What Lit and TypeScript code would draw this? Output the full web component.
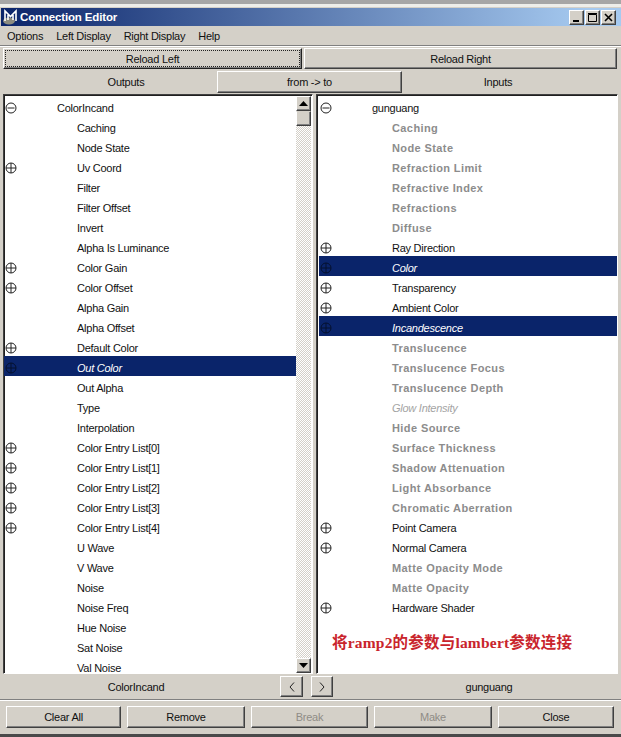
import { LitElement, html, css, svg } from "lit";
import { customElement } from "lit/decorators.js";

type Kind = "" | "dis" | "sel" | "ghost";
interface Row { label: string; exp?: "plus" | "minus"; kind?: Kind; top?: boolean }

const left: Row[] = [
  { label: "ColorIncand", exp: "minus", top: true },
  { label: "Caching" }, { label: "Node State" }, { label: "Uv Coord", exp: "plus" },
  { label: "Filter" }, { label: "Filter Offset" }, { label: "Invert" },
  { label: "Alpha Is Luminance" }, { label: "Color Gain", exp: "plus" },
  { label: "Color Offset", exp: "plus" }, { label: "Alpha Gain" }, { label: "Alpha Offset" },
  { label: "Default Color", exp: "plus" }, { label: "Out Color", exp: "plus", kind: "sel" },
  { label: "Out Alpha" }, { label: "Type" }, { label: "Interpolation" },
  { label: "Color Entry List[0]", exp: "plus" }, { label: "Color Entry List[1]", exp: "plus" },
  { label: "Color Entry List[2]", exp: "plus" }, { label: "Color Entry List[3]", exp: "plus" },
  { label: "Color Entry List[4]", exp: "plus" }, { label: "U Wave" }, { label: "V Wave" },
  { label: "Noise" }, { label: "Noise Freq" }, { label: "Hue Noise" }, { label: "Sat Noise" },
  { label: "Val Noise" },
];

const d = (label: string): Row => ({ label, kind: "dis" });
const right: Row[] = [
  { label: "gunguang", exp: "minus", top: true },
  d("Caching"), d("Node State"), d("Refraction Limit"), d("Refractive Index"), d("Refractions"),
  d("Diffuse"), { label: "Ray Direction", exp: "plus" }, { label: "Color", exp: "plus", kind: "sel" },
  { label: "Transparency", exp: "plus" }, { label: "Ambient Color", exp: "plus" },
  { label: "Incandescence", exp: "plus", kind: "sel" }, d("Translucence"), d("Translucence Focus"),
  d("Translucence Depth"), { label: "Glow Intensity", kind: "ghost" }, d("Hide Source"),
  d("Surface Thickness"), d("Shadow Attenuation"), d("Light Absorbance"), d("Chromatic Aberration"),
  { label: "Point Camera", exp: "plus" }, { label: "Normal Camera", exp: "plus" },
  d("Matte Opacity Mode"), d("Matte Opacity"), { label: "Hardware Shader", exp: "plus" },
];

const expander = (t?: "plus" | "minus") =>
  t
    ? html`<svg class="exp" viewBox="0 0 12 12" width="12" height="12" fill="none" stroke="currentColor" stroke-width="1">
        <circle cx="6" cy="6" r="5"></circle>
        ${svg`<path d="${t === "plus" ? "M1 6H11M6 1V11" : "M2.5 6H9.5"}"></path>`}
      </svg>`
    : html`<span class="exp"></span>`;

const arrow = (dir: "up" | "down") =>
  html`<svg viewBox="0 0 9 5" width="9" height="5"><path d="${dir === "up" ? "M0 5H9L4.5 0Z" : "M0 0H9L4.5 5Z"}" fill="#000"></path></svg>`;

const chevron = (dir: "l" | "r") =>
  html`<svg viewBox="0 0 6 10" width="6" height="10" fill="none" stroke="#222" stroke-width="1"><path d="${dir === "l" ? "M5 0.5L1 5L5 9.5" : "M1 0.5L5 5L1 9.5"}"></path></svg>`;

@customElement("app-root")
export class AppRoot extends LitElement {
  static styles = css`
    :host {
      display: flex; flex-direction: column; width: 621px; height: 737px; overflow: hidden;
      background: #d4d0c8; color: #111;
      font: 11px "Liberation Sans", Arial, sans-serif; letter-spacing: -0.25px;
    }
    .chrome { height: 4px; background: #a6a6a6; flex: none; }
    .chrome2 { height: 4px; background: linear-gradient(#eeeeea 0 75%, #d4d0c8 75%); flex: none; }
    .title {
      height: 18px; flex: none; margin-left: 1px; display: flex; align-items: center;
      background: linear-gradient(90deg, #0a246a, #a6caf0 95%);
      color: #fff; font-weight: bold; font-size: 11.5px; letter-spacing: -0.15px; padding-left: 1px; padding-right: 5px;
    }
    .title .name { flex: 1; }
    .wbtns { display: flex; gap: 1px; }
    .wbtn, .btn, .sbtn, .nav {
      background: #d4d0c8; box-sizing: border-box;
      border: 1px solid; border-color: #fff #404040 #404040 #fff;
      box-shadow: inset -1px -1px #808080;
    }
    .wbtn { width: 15px; height: 15px; display: grid; place-items: center; }
    .menu { height: 19px; flex: none; display: flex; align-items: center; gap: 13px; padding-left: 7px; }
    .groove { height: 2px; flex: none; background: linear-gradient(#808080 50%, #fff 50%); }
    .reload { display: flex; gap: 2px; padding: 1px 4px 0 3px; flex: none; height: 23px; box-sizing: border-box; }
    .btn { display: grid; place-items: center; height: 21px; }
    .reload .btn:first-child { width: 299px; outline: 1px dotted #222; outline-offset: -3px; border-color: #fff #202020 #202020 #fff; }
    .reload .btn:last-child { flex: 1; }
    .dir { display: grid; grid-template-columns: 217px 185px 1fr; height: 23px; flex: none; align-items: center; }
    .dir .o { text-align: center; padding-left: 35px; }
    .dir .i { text-align: center; padding-right: 27px; }
    .dir .btn { height: 22px; }
    .lists { display: flex; height: 581px; flex: none; padding-top: 1px; box-sizing: border-box; }
    .pane {
      box-sizing: border-box; background: #fff; height: 580px; overflow: hidden;
      border: 1px solid; border-color: #404040 #fff #fff #404040;
      box-shadow: inset 1px 1px #202020; padding-top: 1px;
    }
    .pane.l { width: 310px; margin-left: 3px; display: flex; padding-right: 1px; }
    .pane.r { width: 302px; margin-left: 3px; padding-left: 2px; }
    .rows { flex: 1; min-width: 0; }
    .row { height: 20px; display: flex; align-items: center; padding-left: 1px; white-space: nowrap; }
    .exp { width: 12px; height: 12px; flex: none; color: #222; display: block; margin-top: 4px; }
    .label { margin-left: 60px; padding-top: 4px; }
    .row.top .label { margin-left: 40px; }
    .row.dis { color: #8c8c8c; font-weight: bold; letter-spacing: 0.4px; }
    .row.sel { background: #0a246a; color: #fff; font-style: italic; }
    .row.sel .exp { color: #04102e; }
    .row.ghost { color: #a4a4a4; font-style: italic; }
    .note {
      margin: 14px 0 0 13px; color: #c9242c; font-weight: bold; font-size: 15.5px; letter-spacing: 0.2px;
      font-family: "Liberation Serif", "Noto Sans CJK SC", serif; white-space: nowrap;
    }
    .scroll { width: 15px; flex: none; display: flex; flex-direction: column; }
    .sbtn { height: 15px; flex: none; display: grid; place-items: center; }
    .thumb { height: 15px; flex: none; background: #d4d0c8; border: 1px solid; border-color: #d4d0c8 #404040 #404040 #fff; box-sizing: border-box; box-shadow: inset -1px -1px #808080; }
    .track { flex: 1; background: repeating-conic-gradient(#d4d0c8 0 25%, #fff 0 50%) 0 0 / 2px 2px; }
    .foot { height: 25px; flex: none; display: grid; grid-template-columns: 280px 23px 8px 22px 1fr; align-items: center; }
    .foot .a { text-align: center; padding-right: 8px; }
    .foot .b { text-align: center; padding-left: 24px; }
    .nav { height: 21px; display: grid; place-items: center; }
    .actions { display: grid; grid-template-columns: 115px 118px 117px 118px 1fr; gap: 6px; padding: 5px 7px 0 6px; flex: none; height: 28px; box-sizing: border-box; }
    .actions .btn { height: 22px; }
    .btn.off { color: #8f8c86; }
    .spacer { flex: 1; }
    .edge { height: 3px; flex: none; background: #4a4a4a; }
  `;

  private rows(list: Row[]) {
    return list.map(
      (r) => html`<div class="row ${r.kind ?? ""} ${r.top ? "top" : ""}">
        ${expander(r.exp)}<span class="label">${r.label}</span>
      </div>`
    );
  }

  render() {
    return html`
      <div class="chrome"></div>
      <div class="chrome2"></div>
      <div class="title">
        <svg viewBox="0 0 18 18" width="18" height="18">
          <ellipse cx="7" cy="13" rx="6" ry="3.5" fill="#8c8c80"></ellipse>
          <path d="M3 13V3L8.5 8.5L14 3V13M6 12V7M11 12V7" fill="none" stroke="#fff" stroke-width="1.6"></path>
        </svg>
        <span class="name">Connection Editor</span>
        <div class="wbtns">
          <div class="wbtn"><svg viewBox="0 0 11 11" width="11" height="11"><path d="M2 8H8V10H2Z" fill="#000"></path></svg></div>
          <div class="wbtn"><svg viewBox="0 0 11 11" width="11" height="11"><path d="M1.5 2.5H9.5V9.5H1.5ZM1 1.5H10" fill="none" stroke="#000"></path></svg></div>
          <div class="wbtn"><svg viewBox="0 0 11 11" width="11" height="11"><path d="M2 2L9 9M9 2L2 9" stroke="#000" stroke-width="1.6"></path></svg></div>
        </div>
      </div>
      <div class="menu"><span>Options</span><span>Left Display</span><span>Right Display</span><span>Help</span></div>
      <div class="groove"></div>
      <div class="reload"><div class="btn">Reload Left</div><div class="btn">Reload Right</div></div>
      <div class="dir"><div class="o">Outputs</div><div class="btn">from -&gt; to</div><div class="i">Inputs</div></div>
      <div class="lists">
        <div class="pane l">
          <div class="rows">${this.rows(left)}</div>
          <div class="scroll">
            <div class="sbtn">${arrow("up")}</div>
            <div class="thumb"></div>
            <div class="track"></div>
            <div class="sbtn">${arrow("down")}</div>
          </div>
        </div>
        <div class="pane r">
          ${this.rows(right)}
          <div class="note">将ramp2的参数与lambert参数连接</div>
        </div>
      </div>
      <div class="foot">
        <div class="a">ColorIncand</div>
        <div class="nav">${chevron("l")}</div>
        <span></span>
        <div class="nav">${chevron("r")}</div>
        <div class="b">gunguang</div>
      </div>
      <div class="groove"></div>
      <div class="actions">
        <div class="btn">Clear All</div>
        <div class="btn">Remove</div>
        <div class="btn off">Break</div>
        <div class="btn off">Make</div>
        <div class="btn">Close</div>
      </div>
      <div class="spacer"></div>
      <div class="edge"></div>
    `;
  }
}
